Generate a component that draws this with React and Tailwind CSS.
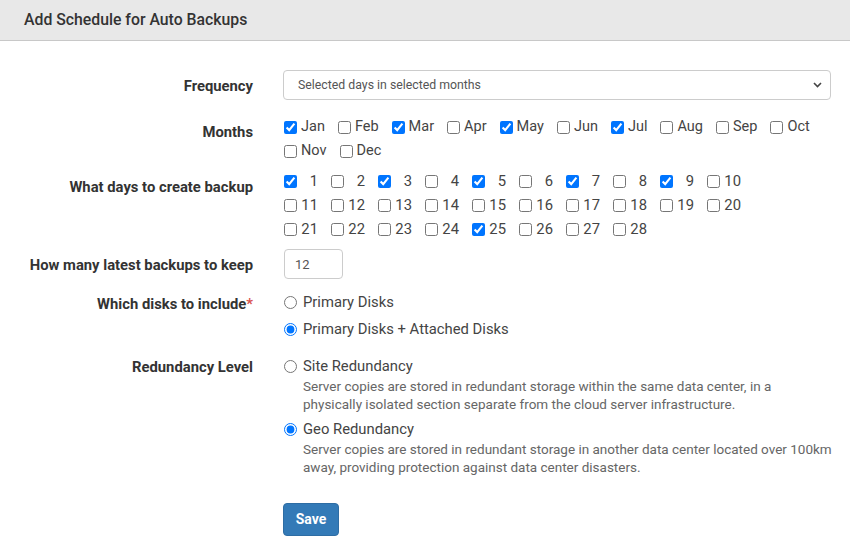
import React from 'react';

const months = ['Jan', 'Feb', 'Mar', 'Apr', 'May', 'Jun', 'Jul', 'Aug', 'Sep', 'Oct', 'Nov', 'Dec'];
const checkedMonths = ['Jan', 'Mar', 'May', 'Jul'];
const checkedDays = [1, 3, 5, 7, 9, 25];
const days = Array.from({ length: 28 }, (_, i) => i + 1);

const Label = ({ children, className = '' }) => (
    <div className={`w-[253px] shrink-0 text-right text-[14.8px] font-bold text-[#333] ${className}`}>{children}</div>
);

const App = () => {
    return (
        <div className="min-h-screen bg-white text-[#444]" style={{ fontFamily: 'Roboto, "Liberation Sans", sans-serif' }}>
            {/* Header */}
            <div className="h-[41px] bg-[#e8e8e8] border-b border-[#c8c8c8] flex items-center px-6">
                <h1 className="text-[15.8px] font-medium text-[#333]">Add Schedule for Auto Backups</h1>
            </div>

            {/* Frequency */}
            <div className="flex mt-[29px] items-center">
                <Label className="pt-[2px]">Frequency</Label>
                <div className="ml-[30px] mr-[19px] flex-1 relative">
                    <select
                        className="w-full h-[30px] appearance-none border border-[#ccc] rounded-[4px] pl-[14px] text-[12.3px] text-[#555] bg-white outline-none"
                        defaultValue="sel"
                    >
                        <option value="sel">Selected days in selected months</option>
                    </select>
                    <svg className="absolute right-[9px] top-[12px]" width="9" height="6" viewBox="0 0 9 6">
                        <path d="M1 1l3.5 3.5L8 1" fill="none" stroke="#444" strokeWidth="1.6" />
                    </svg>
                </div>
            </div>

            {/* Months */}
            <div className="flex mt-[15px]">
                <Label className="pt-[6px]">Months</Label>
                <div className="ml-[31px] flex flex-wrap w-[556px]">
                    {months.map((m) => (
                        <label key={m} className="h-[24px] flex items-center mr-[13px] text-[14.5px] text-[#444]">
                            <input type="checkbox" defaultChecked={checkedMonths.includes(m)} className="m-0 w-[13px] h-[13px]" />
                            <span className="ml-[4px]">{m}</span>
                        </label>
                    ))}
                </div>
            </div>

            {/* Days */}
            <div className="flex mt-[6px]">
                <Label className="pt-[7px]">What days to create backup</Label>
                <div className="ml-[31px] grid grid-cols-10 w-[470px]">
                    {days.map((d) => (
                        <label key={d} className="h-[24px] flex items-center text-[14.8px] text-[#444]">
                            <input type="checkbox" defaultChecked={checkedDays.includes(d)} className="m-0 w-[13px] h-[13px]" />
                            <span className="ml-[2px] w-[19px] text-right">{d}</span>
                        </label>
                    ))}
                </div>
            </div>

            {/* Keep */}
            <div className="flex mt-[8px] items-center">
                <Label className="pt-[2px]">How many latest backups to keep</Label>
                <input
                    type="text"
                    defaultValue="12"
                    className="ml-[31px] w-[59px] h-[30px] border border-[#ccc] rounded-[4px] px-[10px] text-[13px] text-[#555] outline-none"
                />
            </div>

            {/* Disks */}
            <div className="flex mt-[10px]">
                <Label className="pt-[4px]">
                    Which disks to include<span className="text-[#d9534f]">*</span>
                </Label>
                <div className="ml-[31px] flex flex-col">
                    <label className="h-[27px] flex items-center text-[14.8px] text-[#444]">
                        <input type="radio" name="disks" className="m-0 w-[13px] h-[13px]" />
                        <span className="ml-[6px]">Primary Disks</span>
                    </label>
                    <label className="h-[27px] flex items-center text-[14.8px] text-[#444]">
                        <input type="radio" name="disks" defaultChecked className="m-0 w-[13px] h-[13px]" />
                        <span className="ml-[6px]">Primary Disks + Attached Disks</span>
                    </label>
                </div>
            </div>

            {/* Redundancy */}
            <div className="flex mt-[12px]">
                <Label className="pt-[1px]">Redundancy Level</Label>
                <div className="ml-[31px] flex flex-col">
                    <label className="h-[22px] flex items-center text-[14.8px] text-[#444]">
                        <input type="radio" name="red" className="m-0 w-[13px] h-[13px]" />
                        <span className="ml-[6px]">Site Redundancy</span>
                    </label>
                    <p className="ml-[19px] text-[13.5px] leading-[18px] text-[#666] whitespace-nowrap">
                        Server copies are stored in redundant storage within the same data center, in a
                        <br />
                        physically isolated section separate from the cloud server infrastructure.
                    </p>
                    <label className="h-[22px] mt-[5px] flex items-center text-[14.8px] text-[#444]">
                        <input type="radio" name="red" defaultChecked className="m-0 w-[13px] h-[13px]" />
                        <span className="ml-[6px]">Geo Redundancy</span>
                    </label>
                    <p className="ml-[19px] text-[13.5px] leading-[18px] text-[#666] whitespace-nowrap">
                        Server copies are stored in redundant storage in another data center located over 100km
                        <br />
                        away, providing protection against data center disasters.
                    </p>
                </div>
            </div>

            {/* Save */}
            <div className="flex mt-[27px] pb-[20px]">
                <div className="w-[253px] shrink-0" />
                <button className="ml-[30px] w-[56px] h-[33px] bg-[#337ab7] border border-[#2e6da4] rounded-[4px] text-white text-[14px] font-bold">
                    Save
                </button>
            </div>
        </div>
    );
};

export default App;
